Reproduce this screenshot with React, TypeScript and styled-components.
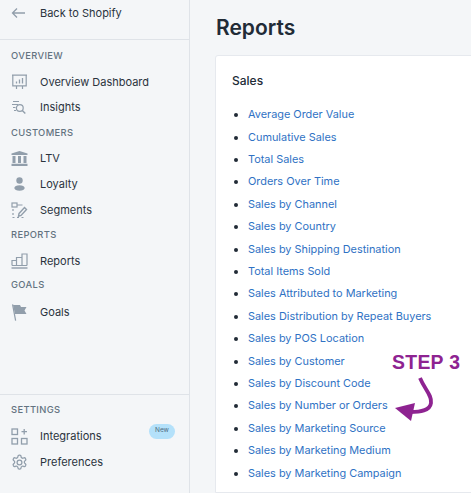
import React from "react";
import styled, { createGlobalStyle } from "styled-components";

const Global = createGlobalStyle`
  html, body { margin: 0; padding: 0; height: 100%; overflow: hidden; background: #f4f6f8; }
  #root { height: 100%; }
  * { box-sizing: border-box; }
`;

const Page = styled.div`
  display: flex;
  width: 471px;
  height: 493px;
  overflow: hidden;
  position: relative;
  font-family: Inter, "Liberation Sans", sans-serif;
  color: #212b36;
  background: #f4f6f8;
`;

const Sidebar = styled.aside`
  width: 190px;
  flex: none;
  height: 100%;
  display: flex;
  flex-direction: column;
  border-right: 1px solid #dfe3e8;
`;

const BackRow = styled.div`
  height: 40px;
  flex: none;
  display: flex;
  align-items: flex-start;
  padding: 3px 0 0 11px;
  border-bottom: 1px solid #dfe3e8;
`;

const Nav = styled.nav`
  display: flex;
  flex-direction: column;
  padding-top: 7px;
`;

const Footer = styled.div`
  margin-top: auto;
  border-top: 1px solid #dfe3e8;
  padding: 6px 0 18px;
  display: flex;
  flex-direction: column;
`;

const Heading = styled.div<{ $gap?: number }>`
  height: 17px;
  margin-top: ${(p) => p.$gap ?? 0}px;
  padding-left: 11px;
  font-size: 9.4px;
  line-height: 17px;
  font-weight: 500;
  letter-spacing: 0.35px;
  color: #637381;
`;

const Row = styled.div<{ $gap?: number }>`
  height: 26px;
  margin-top: ${(p) => p.$gap ?? 0}px;
  display: flex;
  align-items: center;
  padding-left: 11px;
  font-size: 11px;
  color: #2a333d;
  position: relative;
`;

const IconSlot = styled.span`
  width: 29px;
  flex: none;
  display: flex;
  align-items: center;
  color: #919eab;
`;

const BackSlot = styled(IconSlot)`
  height: 20px;
`;

const BackLabel = styled.span`
  font-size: 11px;
  line-height: 20px;
  color: #2a333d;
`;

const Badge = styled.span`
  position: absolute;
  left: 149px;
  top: 1px;
  width: 26px;
  height: 15px;
  border-radius: 8px;
  background: #b4e1fa;
  color: #4d6b80;
  font-size: 6.5px;
  line-height: 13px;
  text-align: center;
`;

const Main = styled.main`
  flex: 1;
  min-width: 0;
  padding: 14px 0 0 25px;
  display: flex;
  flex-direction: column;
`;

const Title = styled.h1`
  margin: 0 0 0 1px;
  font-size: 21px;
  line-height: 27px;
  font-weight: 600;
  color: #212b36;
`;

const Card = styled.section`
  margin-top: 14px;
  width: 300px;
  flex: 1;
  background: #fff;
  border: 1px solid #e6e9ee;
  border-radius: 3px 0 0 0;
  padding: 16px 0 0 16px;
`;

const CardTitle = styled.h2`
  margin: 0 0 16.3px;
  font-size: 12px;
  line-height: 17px;
  font-weight: 500;
`;

const List = styled.ul`
  margin: 0;
  padding: 0 0 0 16px;
  list-style: disc;
  color: #212b36;
  font-size: 11px;
`;

const Item = styled.li`
  height: 22.4px;
  line-height: 18px;
  white-space: nowrap;
`;

const ReportLink = styled.a`
  color: #2f72c4;
  font-size: 10.9px;
  text-decoration: none;
`;

const Step = styled.div`
  position: absolute;
  left: 392px;
  top: 350px;
  font-family: "Liberation Sans", Arial, sans-serif;
  font-size: 19.4px;
  line-height: 24px;
  font-weight: 700;
  letter-spacing: 0.3px;
  color: #8e2391;
`;

const ArrowMark = styled.svg`
  position: absolute;
  left: 390px;
  top: 372px;
`;

const Back = () => (
  <svg width="15" height="12" viewBox="0 0 15 12" fill="none" stroke="#919eab" strokeWidth="1.3">
    <path d="M1.5 6H14M6 1.5 1.5 6 6 10.5" />
  </svg>
);
const Present = () => (
  <svg width="17" height="17" viewBox="0 0 17 17" fill="none" stroke="#919eab" strokeWidth="1.2">
    <path d="M1 1.2h15M1.800 1.200v10.600h13.400V1.200M5.500 12v3M11.500 12v3" />
    <path d="M5.500 9.500V7.500M8.500 9.500V5.500M11.500 9.500V4" strokeWidth="1.3" />
  </svg>
);
const Insight = () => (
  <svg width="16" height="15" viewBox="0 0 16 15" fill="none" stroke="#919eab" strokeWidth="1.2">
    <path d="M2 1.500h6M1 4.500h6M2 7.500h2.500M3 10.500h2" />
    <circle cx="8.8" cy="8" r="3.4" />
    <path d="m11.300 10.500 3 3" strokeWidth="1.4" />
  </svg>
);
const Bank = () => (
  <svg width="17" height="15" viewBox="0 0 17 15" fill="#919eab">
    <path d="M8.500 0 16.500 2.600V4H.5V2.600Z" />
    <path d="M1.500 5h3v7h-3zM7 5h3v7H7zM12.500 5h3v7h-3zM.5 12.800h16V15H.5z" />
  </svg>
);
const Person = () => (
  <svg width="17" height="14" viewBox="0 0 17 14" fill="#919eab">
    <circle cx="8.5" cy="3.5" r="3.2" />
    <ellipse cx="8.5" cy="11" rx="5.2" ry="2.8" />
  </svg>
);
const Segment = () => (
  <svg width="17" height="17" viewBox="0 0 17 17" fill="none" stroke="#919eab" strokeWidth="1.2">
    <rect x="1" y="1" width="5" height="4" />
    <path d="M6 3h5.500M2 7v2M2 11v2M1.500 15.500h2M6 15.500h2M10.500 15.500h2" />
    <path d="m8 11.500 5.500-6 2 2-5.500 6-2.500.7Z" strokeWidth="1.4" />
  </svg>
);
const Bars = () => (
  <svg width="17" height="16" viewBox="0 0 17 16" fill="none" stroke="#919eab" strokeWidth="1.2">
    <path d="M1 12.500V7.500h4.500v5M5.500 12.500V4.500H11v8M11 12.500V1h5v11.500M1 12.500h15" />
    <path d="M.5 15h16" strokeWidth="1.4" />
  </svg>
);
const Flag = () => (
  <svg width="16" height="17" viewBox="0 0 16 17" fill="#919eab">
    <path d="M1 .5 2.200.2 5.200 16.500 4 16.800Z" />
    <path d="M2 1h7l1 2h5.500l-2 3.500 2 3.500H4Z" />
  </svg>
);
const Grid = () => (
  <svg width="17" height="17" viewBox="0 0 17 17" fill="none" stroke="#919eab" strokeWidth="1.3">
    <rect x="1" y="1" width="5.5" height="5.5" />
    <rect x="1" y="10.500" width="5.5" height="5.5" />
    <rect x="10.500" y="10.500" width="5.5" height="5.5" />
    <path d="M13.200 1v5.500M10.500 3.700H16" />
  </svg>
);
const Gear = () => (
  <svg width="17" height="17" viewBox="0 0 24 24" fill="none" stroke="#919eab" strokeWidth="1.8" strokeLinejoin="round">
    <path d="M12.200 1.500h-.4a2 2 0 0 0-2 2v.2a2 2 0 0 1-1 1.700l-.4.3a2 2 0 0 1-2 0l-.2-.1a2 2 0 0 0-2.700.7l-.2.4a2 2 0 0 0 .7 2.700l.2.1a2 2 0 0 1 1 1.700v.6a2 2 0 0 1-1 1.700l-.2.1a2 2 0 0 0-.7 2.700l.2.4a2 2 0 0 0 2.700.7l.2-.1a2 2 0 0 1 2 0l.4.3a2 2 0 0 1 1 1.700v.2a2 2 0 0 0 2 2h.4a2 2 0 0 0 2-2v-.2a2 2 0 0 1 1-1.700l.4-.3a2 2 0 0 1 2 0l.2.1a2 2 0 0 0 2.700-.7l.2-.4a2 2 0 0 0-.7-2.700l-.2-.1a2 2 0 0 1-1-1.700v-.6a2 2 0 0 1 1-1.700l.2-.1a2 2 0 0 0 .7-2.700l-.2-.4a2 2 0 0 0-2.700-.7l-.2.1a2 2 0 0 1-2 0l-.4-.3a2 2 0 0 1-1-1.700v-.2a2 2 0 0 0-2-2Z" />
    <circle cx="12" cy="12" r="3.4" />
  </svg>
);

const reports = [
  "Average Order Value",
  "Cumulative Sales",
  "Total Sales",
  "Orders Over Time",
  "Sales by Channel",
  "Sales by Country",
  "Sales by Shipping Destination",
  "Total Items Sold",
  "Sales Attributed to Marketing",
  "Sales Distribution by Repeat Buyers",
  "Sales by POS Location",
  "Sales by Customer",
  "Sales by Discount Code",
  "Sales by Number or Orders",
  "Sales by Marketing Source",
  "Sales by Marketing Medium",
  "Sales by Marketing Campaign",
];

export default function App() {
  return (
    <Page>
      <Global />
      <Sidebar>
        <BackRow>
          <BackSlot><Back /></BackSlot>
          <BackLabel>Back to Shopify</BackLabel>
        </BackRow>
        <Nav>
          <Heading>OVERVIEW</Heading>
          <Row $gap={5}><IconSlot><Present /></IconSlot>Overview Dashboard</Row>
          <Row $gap={-1}><IconSlot><Insight /></IconSlot>Insights</Row>
          <Heading $gap={4}>CUSTOMERS</Heading>
          <Row $gap={4}><IconSlot><Bank /></IconSlot>LTV</Row>
          <Row><IconSlot><Person /></IconSlot>Loyalty</Row>
          <Row><IconSlot><Segment /></IconSlot>Segments</Row>
          <Heading $gap={3}>REPORTS</Heading>
          <Row $gap={5}><IconSlot><Bars /></IconSlot>Reports</Row>
          <Heading $gap={2}>GOALS</Heading>
          <Row $gap={6}><IconSlot><Flag /></IconSlot>Goals</Row>
        </Nav>
        <Footer>
          <Heading>SETTINGS</Heading>
          <Row $gap={5}>
            <IconSlot><Grid /></IconSlot>Integrations
            <Badge>New</Badge>
          </Row>
          <Row><IconSlot><Gear /></IconSlot>Preferences</Row>
        </Footer>
      </Sidebar>
      <Main>
        <Title>Reports</Title>
        <Card>
          <CardTitle>Sales</CardTitle>
          <List>
            {reports.map((r) => (
              <Item key={r}><ReportLink>{r}</ReportLink></Item>
            ))}
          </List>
        </Card>
      </Main>
      <Step>STEP 3</Step>
      <ArrowMark width="50" height="50" viewBox="0 0 50 50">
        <path d="M30 6C35 18 42 23 41 31 40 39 30 40 20 40" fill="none" stroke="#8e2391" strokeWidth="3.8" />
        <path d="M5 36 25 31 21 49Z" fill="#8e2391" />
      </ArrowMark>
    </Page>
  );
}
